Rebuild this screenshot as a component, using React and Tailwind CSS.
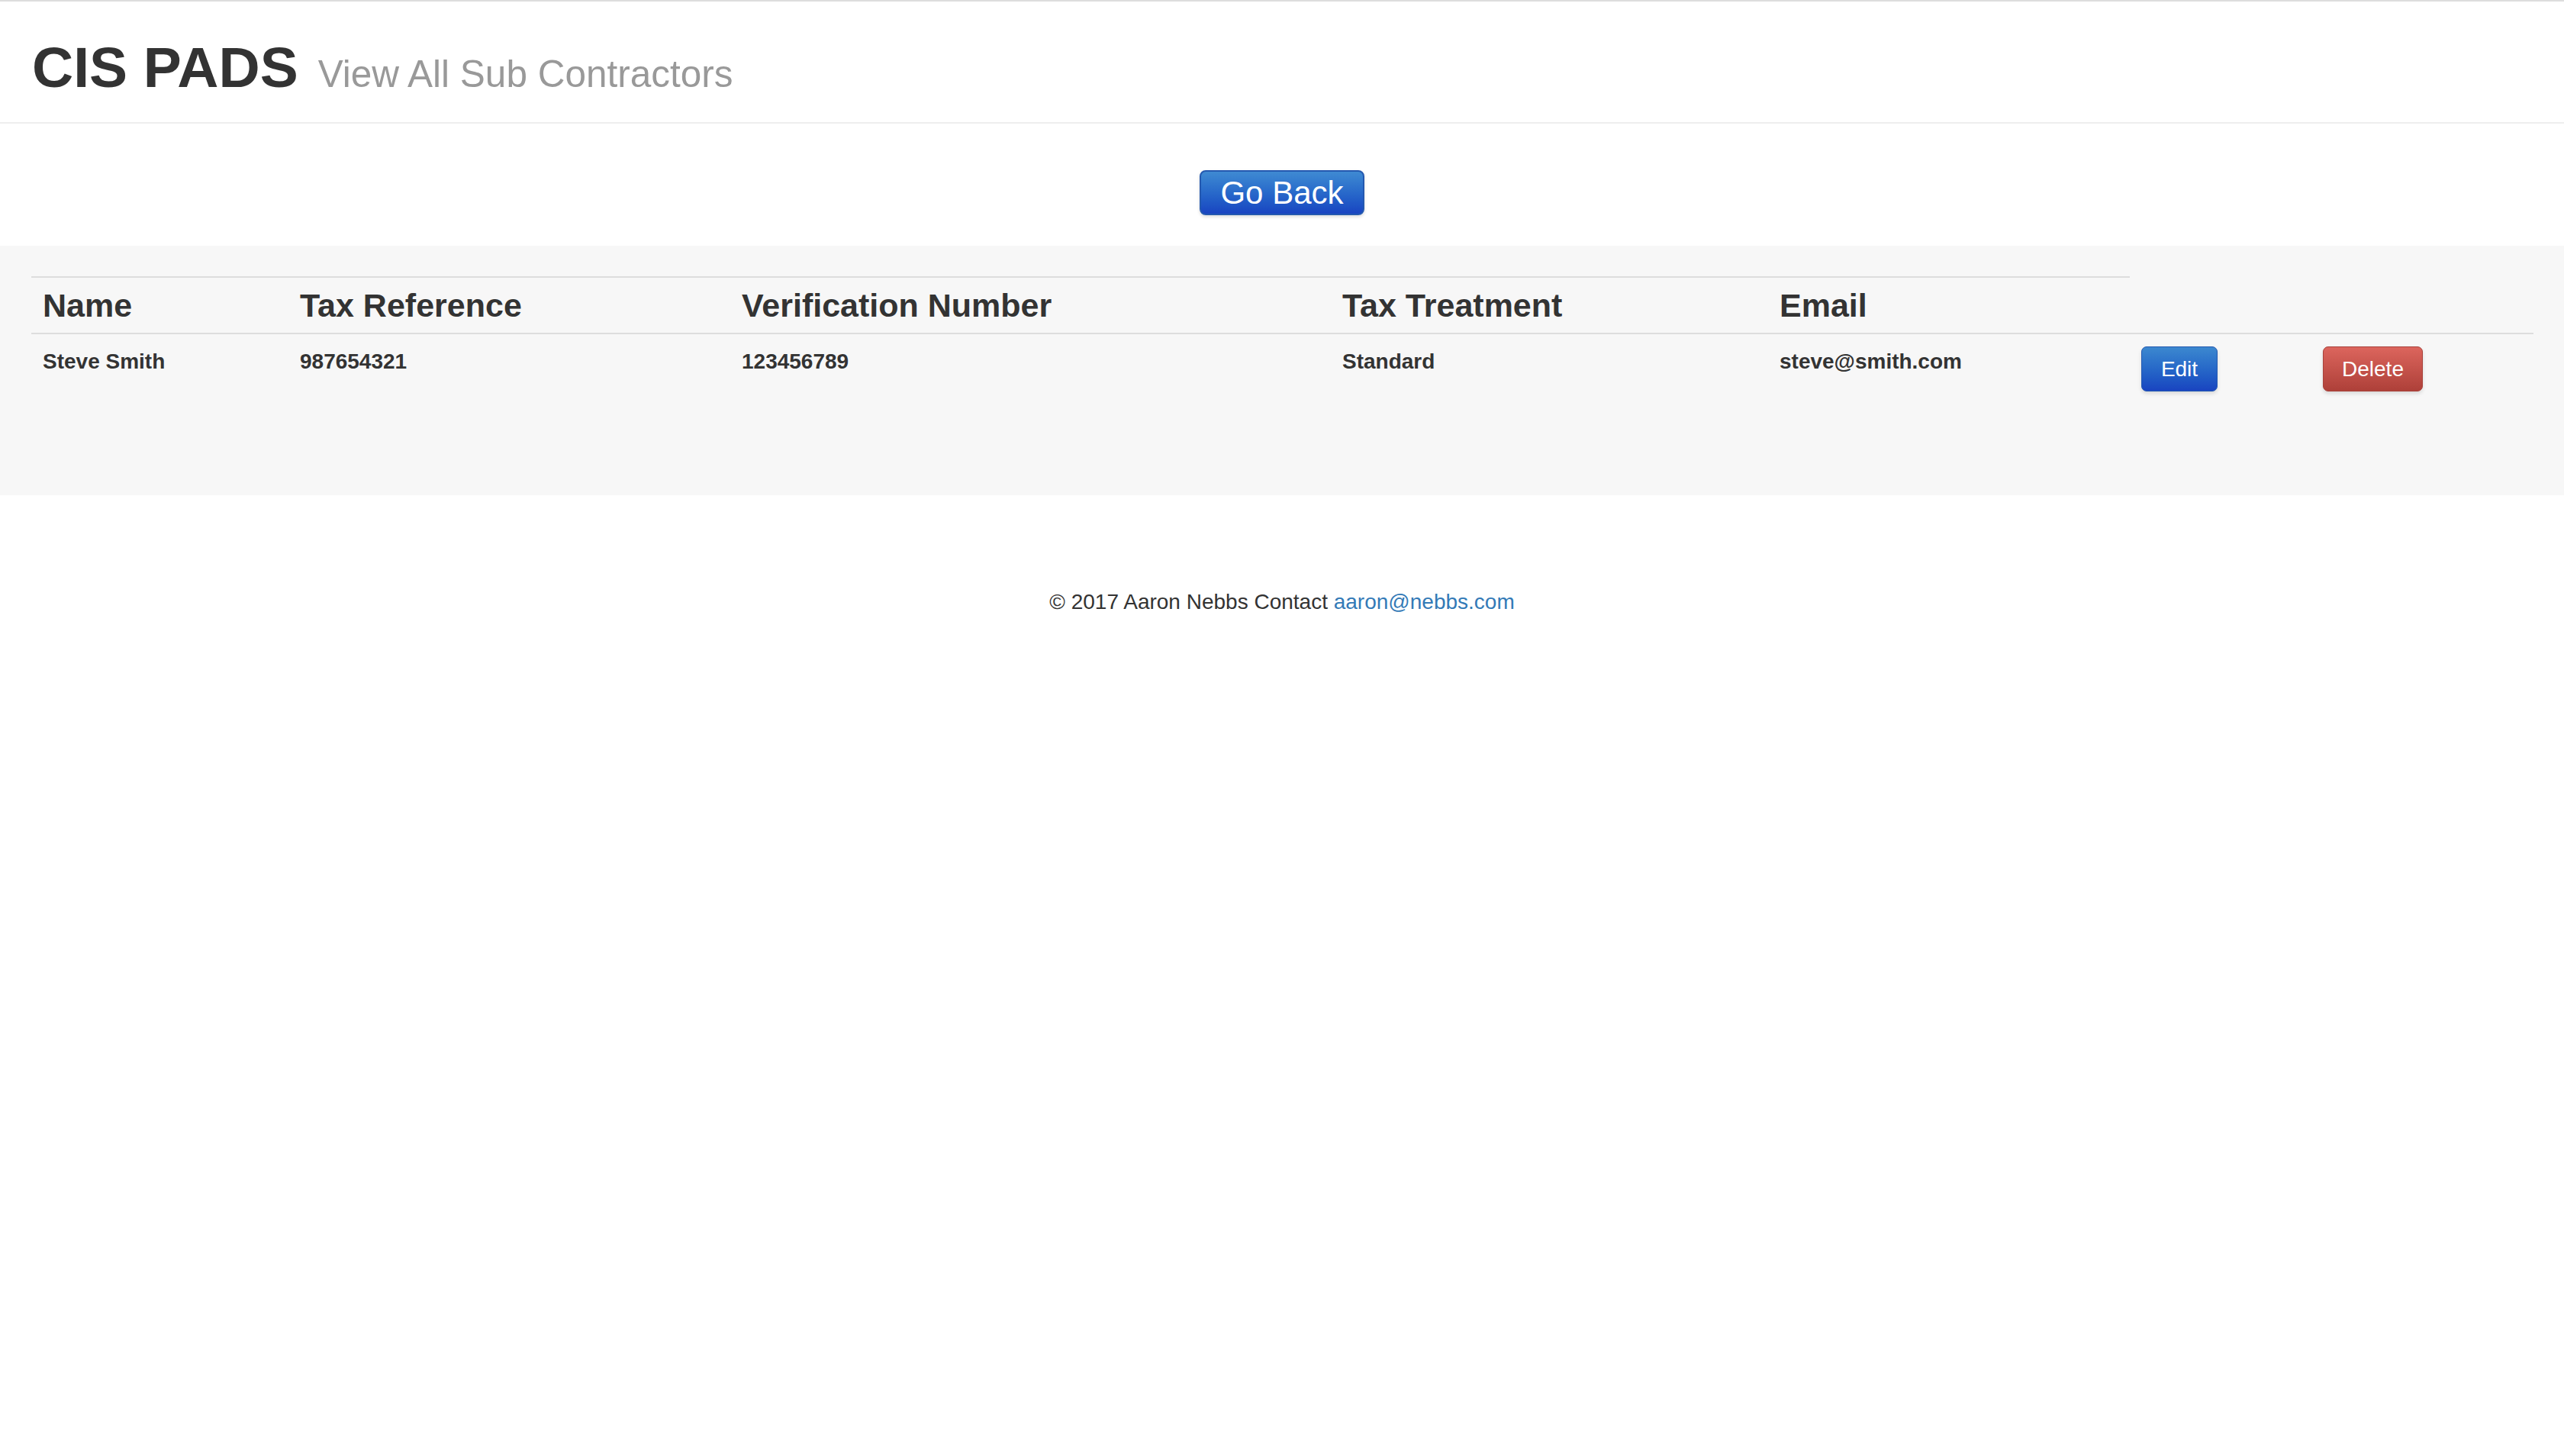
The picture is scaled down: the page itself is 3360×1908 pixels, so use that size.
const font = { fontFamily: '"Liberation Sans", Arial, sans-serif' };

const columns = ['Name', 'Tax Reference', 'Verification Number', 'Tax Treatment', 'Email'];

const subContractors = [
  {
    name: 'Steve Smith',
    taxRef: '987654321',
    verification: '123456789',
    treatment: 'Standard',
    email: 'steve@smith.com',
  },
];

export default function App() {
  return (
    <div className="min-h-[1908px] bg-white text-[#333] text-[28px] leading-[40px]" style={font}>
      {/* header */}
      <header className="border-t-2 border-[#ddd] border-b-2 border-b-[#eee] pl-[42px] pt-[46px] pb-[31px]">
        <h1 className="text-[75px] leading-[81px] font-bold text-[#333] whitespace-nowrap">
          CIS PADS
          <small className="ml-[26px] text-[49.5px] leading-none font-normal text-[#999]">View All Sub Contractors</small>
        </h1>
      </header>

      <div className="flex justify-center pt-[61px] pb-[40px]">
        <button className="h-[59px] px-[25px] rounded-[8px] border-2 border-[#2459b0] bg-gradient-to-b from-[#3f8ad2] to-[#1a44c1] text-white text-[42px] leading-[50px] shadow-[0_2px_4px_rgba(0,0,0,0.15)]">
          Go Back
        </button>
      </div>

      {/* table panel */}
      <section className="bg-[#f7f7f7] pt-[40px] pb-[120px] pl-[41px] pr-[40px]">
        <table className="table-fixed w-[3279px] border-collapse text-left">
          <colgroup>
            <col className="w-[337px]" />
            <col className="w-[579px]" />
            <col className="w-[787px]" />
            <col className="w-[573px]" />
            <col className="w-[474px]" />
            <col className="w-[238px]" />
            <col className="w-[291px]" />
          </colgroup>
          <thead>
            <tr>
              {columns.map((c) => (
                <th
                  key={c}
                  className="border-t-2 border-[#ddd] px-[15px] pt-[13px] pb-[12px] text-[43px] leading-[47px] font-bold align-bottom"
                >
                  {c}
                </th>
              ))}
            </tr>
          </thead>
          <tbody>
            {subContractors.map((s) => (
              <tr key={s.email} className="font-bold">
                <td className="border-t-2 border-[#ddd] px-[15px] pt-[16px] pb-[16px] align-top">{s.name}</td>
                <td className="border-t-2 border-[#ddd] px-[15px] pt-[16px] pb-[16px] align-top">{s.taxRef}</td>
                <td className="border-t-2 border-[#ddd] px-[15px] pt-[16px] pb-[16px] align-top">{s.verification}</td>
                <td className="border-t-2 border-[#ddd] px-[15px] pt-[16px] pb-[16px] align-top">{s.treatment}</td>
                <td className="border-t-2 border-[#ddd] px-[15px] pt-[16px] pb-[16px] align-top">{s.email}</td>
                <td className="border-t-2 border-[#ddd] px-[15px] pt-[16px] pb-[16px] align-top">
                  <button className="h-[59px] w-[100px] rounded-[7px] border border-[#2459b0] bg-gradient-to-b from-[#3c88cf] to-[#1a44c0] text-white font-normal text-[28px] shadow-[0_3px_5px_rgba(0,0,0,0.12)]">
                    Edit
                  </button>
                </td>
                <td className="border-t-2 border-[#ddd] px-[15px] pt-[16px] pb-[16px] align-top">
                  <button className="h-[59px] w-[131px] rounded-[7px] border border-[#a8423b] bg-gradient-to-b from-[#dc655d] to-[#ae4039] text-white font-normal text-[28px] shadow-[0_3px_5px_rgba(0,0,0,0.12)]">
                    Delete
                  </button>
                </td>
              </tr>
            ))}
          </tbody>
        </table>
      </section>

      <footer className="pt-[120px] text-center">
        © 2017 Aaron Nebbs Contact{' '}
        <a href="#" className="text-[#337ab7]">aaron@nebbs.com</a>
      </footer>
    </div>
  );
}
